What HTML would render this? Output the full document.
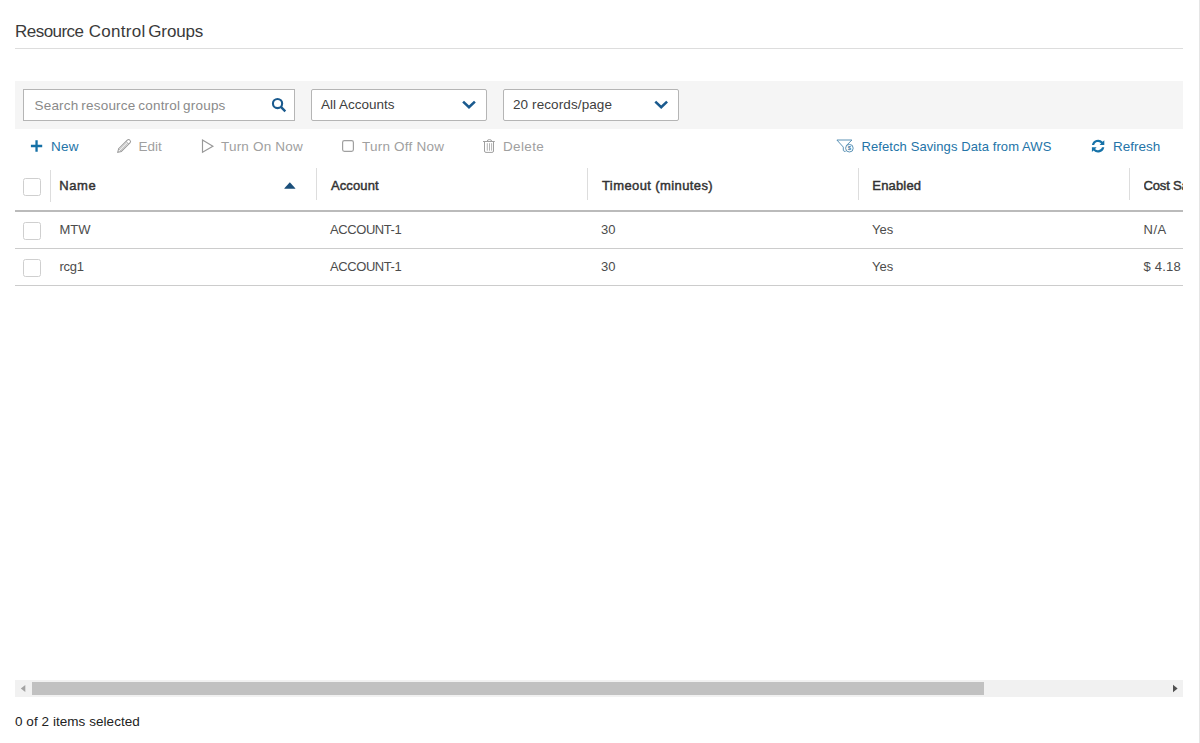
<!DOCTYPE html>
<html>
<head>
<meta charset="utf-8">
<title>Resource Control Groups</title>
<style>
html,body{margin:0;padding:0;background:#fff;}
body{width:1200px;height:743px;position:relative;overflow:hidden;font-family:"Liberation Sans",sans-serif;color:#333;font-size:13px;}
.abs{position:absolute;white-space:nowrap;}
#title{left:15px;top:22px;font-size:17px;line-height:20px;color:#3a3a3a;letter-spacing:0;}
#hr{left:15px;top:48px;width:1168px;height:1px;background:#ddd;}
#bar{left:15px;top:81px;width:1168px;height:48px;background:#f5f5f5;}
.box{position:absolute;top:89px;height:30px;border:1px solid #b5b5b5;background:#fff;box-sizing:content-box;border-radius:2px;}
.box span{position:absolute;left:9px;top:7px;font-size:13px;line-height:16px;color:#404040;white-space:nowrap;}
#search{left:23px;width:270px;border-radius:0;}
#search span{color:#8a8a8a;left:10.5px;top:8px;font-size:13.5px;letter-spacing:0.2px;word-spacing:-1.1px;}
#sel1{left:311px;width:174px;}
#sel1 span{font-size:13.5px;letter-spacing:0px;}
#sel2{left:503px;width:174px;}
#sel2 span{font-size:13.5px;letter-spacing:0.1px;}
.tb{position:absolute;top:139px;line-height:16px;font-size:13px;white-space:nowrap;}
.tb.on{color:#2474a8;}
.tb.off{color:#a0a0a0;}
.th{position:absolute;top:178px;font-size:13px;line-height:16px;font-weight:normal;-webkit-text-stroke:0.45px #333;color:#333;white-space:nowrap;}
.td{position:absolute;font-size:13px;line-height:16px;color:#4c4c4c;white-space:nowrap;}
.sep{position:absolute;top:168px;width:1px;height:32px;background:#ddd;}
.cb{position:absolute;left:23px;width:16px;height:16px;border:1px solid #cfcfcf;border-radius:2.5px;background:#fff;}
.line{position:absolute;left:15px;width:1168px;background:#ccc;}
#icons{position:absolute;left:0;top:0;}
</style>
</head>
<body>
<div id="title" class="abs"><span style="letter-spacing:-0.53px">Resource</span> <span style="letter-spacing:0.3px;margin-left:0.4px">Control</span> <span style="letter-spacing:-0.15px;margin-left:-2px">Groups</span></div>
<div id="hr" class="abs"></div>
<div id="bar" class="abs"></div>
<div id="search" class="box"><span>Search resource control groups</span></div>
<div id="sel1" class="box"><span>All Accounts</span></div>
<div id="sel2" class="box"><span>20 records/page</span></div>

<div class="tb on" style="left:51px;font-size:13.5px;letter-spacing:0.2px">New</div>
<div class="tb off" style="left:138.5px;font-size:13.5px;letter-spacing:0px">Edit</div>
<div class="tb off" style="left:221px;font-size:13.5px;letter-spacing:0.2px">Turn On Now</div>
<div class="tb off" style="left:362px;font-size:13.5px;letter-spacing:0.22px">Turn Off Now</div>
<div class="tb off" style="left:503px;font-size:13.5px;letter-spacing:0.35px">Delete</div>
<div class="tb on" style="left:861.5px;letter-spacing:0.09px">Refetch Savings Data from AWS</div>
<div class="tb on" style="left:1113px;font-size:13.5px;letter-spacing:0px">Refresh</div>

<div class="cb" style="top:178px"></div>
<div class="cb" style="top:222px"></div>
<div class="cb" style="top:259px"></div>

<div class="th" style="left:59.3px;letter-spacing:0.6px">Name</div>
<div class="th" style="left:331px;letter-spacing:0.1px">Account</div>
<div class="th" style="left:602px;letter-spacing:0.4px">Timeout (minutes)</div>
<div class="th" style="left:872.3px;letter-spacing:0.17px">Enabled</div>
<div class="th" style="left:1143.5px;width:39.5px;overflow:hidden;letter-spacing:-0.15px">Cost Savings</div>

<div class="sep" style="left:50px;top:170px"></div>
<div class="sep" style="left:316px"></div>
<div class="sep" style="left:587px"></div>
<div class="sep" style="left:858px"></div>
<div class="sep" style="left:1129px"></div>

<div class="line" style="top:210px;height:2px;background:#bbb"></div>
<div class="line" style="top:248px;height:1px;"></div>
<div class="line" style="top:285px;height:1px;"></div>

<div class="td" style="left:59.5px;top:222px">MTW</div>
<div class="td" style="left:330px;top:222px;letter-spacing:-0.42px">ACCOUNT-1</div>
<div class="td" style="left:601px;top:222px">30</div>
<div class="td" style="left:872px;top:222px">Yes</div>
<div class="td" style="left:1143.5px;top:222px;letter-spacing:0.5px">N/A</div>
<div class="td" style="left:59.5px;top:259px;letter-spacing:-0.3px">rcg1</div>
<div class="td" style="left:330px;top:259px;letter-spacing:-0.42px">ACCOUNT-1</div>
<div class="td" style="left:601px;top:259px">30</div>
<div class="td" style="left:872px;top:259px">Yes</div>
<div class="td" style="left:1143.5px;top:259px;letter-spacing:0.2px">$ 4.18</div>

<div class="abs" style="left:15px;top:680px;width:1168px;height:17px;background:#f1f1f1"></div>
<div class="abs" style="left:32px;top:682px;width:952px;height:13px;background:#c1c1c1"></div>
<div class="abs" style="left:15px;top:714px;font-size:13px;line-height:16px;color:#222;font-size:13.5px;letter-spacing:0.05px">0 of 2 items selected</div>
<div class="abs" style="left:1199px;top:0;width:1px;height:743px;background:#e5e5e5"></div>

<svg id="icons" width="1200" height="743" viewBox="0 0 1200 743">
<!-- search -->
<circle cx="277.55" cy="103.55" r="4.6" fill="none" stroke="#1a5a8e" stroke-width="2.1"/>
<path d="M280.9 106.9 L285.3 111.3" stroke="#1a5a8e" stroke-width="2.4" fill="none"/>
<!-- chevrons -->
<path d="M463.1 101.65 L469 107.2 L474.9 101.65" fill="none" stroke="#1a5a8e" stroke-width="2.6"/>
<path d="M655.3 101.65 L661.2 107.2 L667.1 101.65" fill="none" stroke="#1a5a8e" stroke-width="2.6"/>
<!-- plus -->
<path d="M30.9 146 H42.2 M36.55 140.3 V151.8" stroke="#1570a6" stroke-width="2.3" fill="none"/>
<!-- pencil -->
<g transform="translate(124.1 146) rotate(-44.5)" fill="none" stroke="#999" stroke-width="1">
<path d="M-8.9 0 L-5.8 -1.9 L6.3 -1.9 A1.9 1.9 0 0 1 6.3 1.9 L-5.8 1.9 Z"/>
<path d="M-5.8 -1.9 V1.9 M4.8 -1.9 V1.9 M-5.8 -0.6 H4.8 M-5.8 0.6 H4.8" stroke-width="0.55"/>
</g>
<!-- play -->
<path d="M202.5 140.1 L212.9 146.2 L202.5 152.3 Z" fill="none" stroke="#999" stroke-width="1.15"/>
<!-- square -->
<rect x="342.6" y="140.6" width="10.8" height="10.8" rx="1.8" fill="none" stroke="#a0a0a0" stroke-width="1.2"/>
<!-- trash -->
<g fill="none" stroke="#a0a0a0" stroke-width="1">
<path d="M483 141.5 H494.8"/>
<path d="M487.2 141.3 Q487.2 139.6 489.4 139.6 Q491.7 139.6 491.7 141.3" />
<path d="M484.5 141.5 V151 Q484.5 152.4 486 152.4 H492 Q493.5 152.4 493.5 151 V141.5"/>
<path d="M487.3 143.2 V150.7 M489.5 143.2 V150.7 M491.6 143.2 V150.7" stroke-width="0.8"/>
</g>
<!-- filter -->
<g fill="none" stroke="#4a86ad" stroke-width="0.9">
<path d="M846.3 145.6 L851.9 140 H836.9 L843.3 147.1 V150.3 Q843.4 151.6 845.6 151.4"/>
<circle cx="849.4" cy="148.2" r="3.8" fill="#fff"/>
</g>
<text x="849.4" y="150.4" text-anchor="middle" font-family="Liberation Sans, sans-serif" font-size="6" font-weight="bold" fill="#3b79a3">$</text>
<!-- refresh -->
<g transform="translate(1098.1 146.1)" fill="#1672a8" stroke="none">
<path d="M-6.2 -1.2 A6.3 6.3 0 0 1 4.6 -4.4 L6.2 -5.9 V-1.2 H1.5 L3.0 -2.8 A4.1 4.1 0 0 0 -3.9 -1.2 Z"/>
<path d="M6.2 1.2 A6.3 6.3 0 0 1 -4.6 4.4 L-6.2 5.9 V1.2 H-1.5 L-3.0 2.8 A4.1 4.1 0 0 0 3.9 1.2 Z"/>
</g>
<!-- sort arrow -->
<path d="M289.85 182.3 L295.3 188.2 Q295.4 188.7 294.9 188.7 H284.8 Q284.3 188.7 284.4 188.2 Z" fill="#1a4f7a"/>
<!-- scroll arrows -->
<path d="M25.3 685 V692 L20.8 688.5 Z" fill="#a3a3a3"/>
<path d="M1173 684.8 V692.2 L1177.6 688.5 Z" fill="#505050"/>
</svg>
</body>
</html>
